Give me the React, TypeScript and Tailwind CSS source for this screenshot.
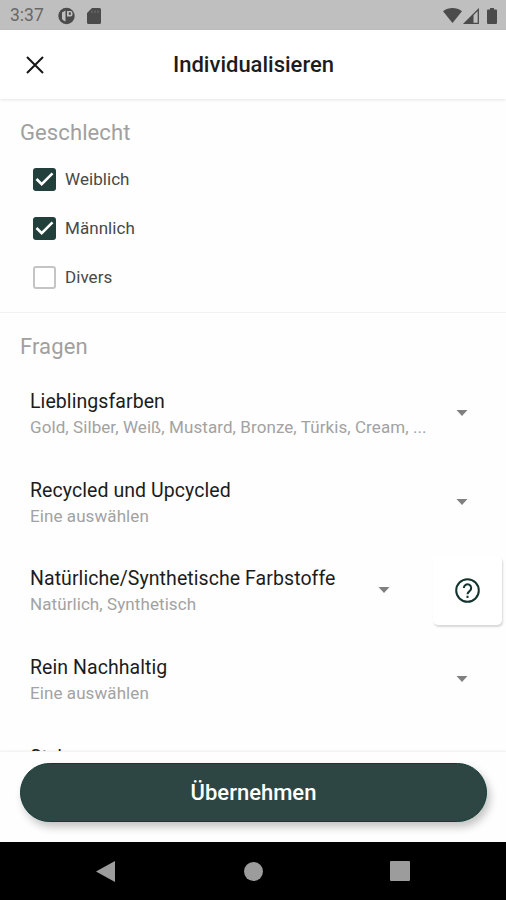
import React from 'react';

interface Question {
  title: string;
  answer?: string;
  help?: boolean;
}

const GENDERS = [
  { label: 'Weiblich', checked: true },
  { label: 'Männlich', checked: true },
  { label: 'Divers', checked: false },
];

const QUESTIONS: Question[] = [
  { title: 'Lieblingsfarben', answer: 'Gold, Silber, Weiß, Mustard, Bronze, Türkis, Cream, ...' },
  { title: 'Recycled und Upcycled', answer: 'Eine auswählen' },
  { title: 'Natürliche/Synthetische Farbstoffe', answer: 'Natürlich, Synthetisch', help: true },
  { title: 'Rein Nachhaltig', answer: 'Eine auswählen' },
];

const App: React.FC = () => (
  <div className="flex h-[900px] w-[506px] flex-col overflow-hidden bg-[#fefefe] font-['Roboto',sans-serif] text-[#1c1c1c]">
    <StatusBar />

    <header className="z-10 flex h-[69px] shrink-0 items-center bg-white px-[26px] shadow-[0_1px_3px_rgba(0,0,0,0.1)]">
      <button aria-label="Schließen" className="w-[18px]">
        <svg viewBox="0 0 18 18" className="h-[18px] w-[18px]" fill="none" stroke="#161616" strokeWidth="2">
          <path d="M1 1l16 16M17 1L1 17" />
        </svg>
      </button>
      <h1 className="flex-1 pr-[17px] text-center text-[22px] font-medium leading-none text-[#1c1c1c]">Individualisieren</h1>
    </header>

    <main className="min-h-0 flex-1 overflow-hidden">
      <section className="h-[214px] border-b border-[#f1f1f1] pt-5">
        <SectionTitle text="Geschlecht" />
        <div className="mt-2 pl-[33px]">
          {GENDERS.map((g) => (
            <label key={g.label} className="flex h-[49px] items-center gap-[9px]">
              <Checkbox checked={g.checked} />
              <span className="text-[17px] leading-none tracking-[0.060px] text-[#484848]">{g.label}</span>
            </label>
          ))}
        </div>
      </section>

      <section className="pt-5">
        <SectionTitle text="Fragen" />
        <div className="mt-[8px]">
          {QUESTIONS.map((q) => (
            <QuestionRow key={q.title} {...q} />
          ))}
          <div className="pl-[30px] pt-[22px]">
            <p className="text-[19.5px] leading-[26px]">Style</p>
          </div>
        </div>
      </section>
    </main>

    <footer className="z-10 h-[91px] shrink-0 border-t border-[#f3f3f3] bg-[#fefefe] pl-5 pr-[19px] pt-[11px] shadow-[0_-1px_2px_rgba(0,0,0,0.03)]">
      <button className="flex h-[59px] w-full items-center justify-center rounded-full border border-[#123a33] bg-[#2d4644] text-[22px] font-medium leading-none text-white shadow-[3px_5px_9px_rgba(0,0,0,0.24)]">
        Übernehmen
      </button>
    </footer>

    <NavigationBar />
  </div>
);

const StatusBar = () => (
  <div className="flex h-[30px] shrink-0 items-center bg-[#bfbfbf] pl-[10px] pr-[9px] pt-px text-[#4b4b4b]">
    <span className="w-[48px] pt-px text-[17.5px] leading-none text-[#686868]">3:37</span>
    <svg viewBox="0 0 18 18" className="h-[18px] w-[18px]">
      <circle cx="8.500" cy="9" r="8.200" fill="currentColor" />
      <path d="M7.500 3.500v11A5.800 5.800 0 0 1 4 12V5.500Z" fill="#bfbfbf" />
      <path d="M9 4h3.500a2 2 0 0 1 2 2v1.500a2 2 0 0 1-2 2H9Z" fill="#bfbfbf" />
      <path d="M10.800 5.300h2v2.500h-2Z" fill="currentColor" />
    </svg>
    <svg viewBox="0 0 14 16" className="ml-[11px] h-4 w-[14px]" fill="currentColor">
      <path d="M5 0h7.500A1.500 1.500 0 0 1 14 1.500v13a1.500 1.500 0 0 1-1.500 1.500h-11A1.500 1.500 0 0 1 0 14.500V5Z" />
      <path d="M5 2.500v2.500M8 2.500v2.500M11 2.500v2.500" stroke="#6d6d6d" strokeWidth="1.200" />
    </svg>
    <div className="ml-auto flex items-center">
      <svg viewBox="0 0 19 15" className="h-[15px] w-[19px]" fill="currentColor">
        <path d="M0 3.200C5.500-1 13.500-1 19 3.200L9.500 15Z" />
      </svg>
      <svg viewBox="0 0 16 16" className="ml-px h-4 w-4">
        <path d="M15.300 1.500V15.300H1.500Z" fill="none" stroke="currentColor" strokeWidth="1.300" />
        <path d="M0.500 16L10.500 6V16Z" fill="currentColor" />
      </svg>
      <svg viewBox="0 0 10 16" className="ml-2 h-4 w-[10px]" fill="currentColor">
        <path d="M3 0h4v1.500h2a1 1 0 0 1 1 1V15a1 1 0 0 1-1 1H1a1 1 0 0 1-1-1V2.500a1 1 0 0 1 1-1h2Z" />
      </svg>
    </div>
  </div>
);

const SectionTitle = ({ text }: { text: string }) => (
  <h2 className="pl-5 text-[22px] leading-7 tracking-[0.1px] text-[#a0a0a0]">{text}</h2>
);

const Checkbox = ({ checked }: { checked: boolean }) =>
  checked ? (
    <span className="flex h-[23px] w-[23px] items-center justify-center rounded-[3px] bg-[#213f3b]">
      <svg viewBox="0 0 23 23" className="h-[23px] w-[23px]" fill="none" stroke="white" strokeWidth="2.600">
        <path d="M3.500 11l5.200 5.200L19.500 5.400" />
      </svg>
    </span>
  ) : (
    <span className="h-[23px] w-[23px] rounded-[3px] border-2 border-[#c4c4c4] bg-white" />
  );

const QuestionRow = ({ title, answer, help }: Question) => (
  <div className="flex h-[88.500px] items-center pl-[30px] pr-1">
    <div className="min-w-0 flex-1 pt-[2.500px]">
      <p className="whitespace-nowrap text-[19.5px] leading-[26px] tracking-[0.07px]">{title}</p>
      <p className="whitespace-nowrap text-[17px] leading-[25px] tracking-[0.080px] text-[#a2a2a2]">{answer}</p>
    </div>
    <svg viewBox="0 0 12 6" className={help ? 'mr-[43px] h-[6px] w-3' : 'mr-[34px] h-[6px] w-3'} fill="#808080">
      <path d="M0.500 0h11L6 6Z" />
    </svg>
    {help && (
      <button aria-label="Hilfe" className="flex h-[69px] w-[69px] items-center justify-center rounded-[5px] bg-white shadow-[1px_2px_2px_rgba(0,0,0,0.15)]">
        <svg viewBox="0 0 25 25" className="h-[25px] w-[25px]" fill="none" stroke="#12332e" strokeWidth="2">
          <circle cx="12.500" cy="12.500" r="11.300" />
          <path d="M8.800 10a3.700 3.700 0 1 1 5.900 3c-1.500 1.200-2.200 1.700-2.200 3.300M12.500 17.700v2.200" />
        </svg>
      </button>
    )}
  </div>
);

const NavigationBar = () => (
  <nav className="flex h-[58px] shrink-0 items-center justify-between bg-black px-[96px]">
    <svg viewBox="0 0 19 21" className="h-[21px] w-[19px]" fill="#9c9c9c">
      <path d="M19 0v21L0 10.500Z" />
    </svg>
    <span className="ml-[2px] h-[19px] w-[19px] rounded-full bg-[#9c9c9c]" />
    <span className="h-5 w-5 rounded-[1px] bg-[#9c9c9c]" />
  </nav>
);

export default App;
